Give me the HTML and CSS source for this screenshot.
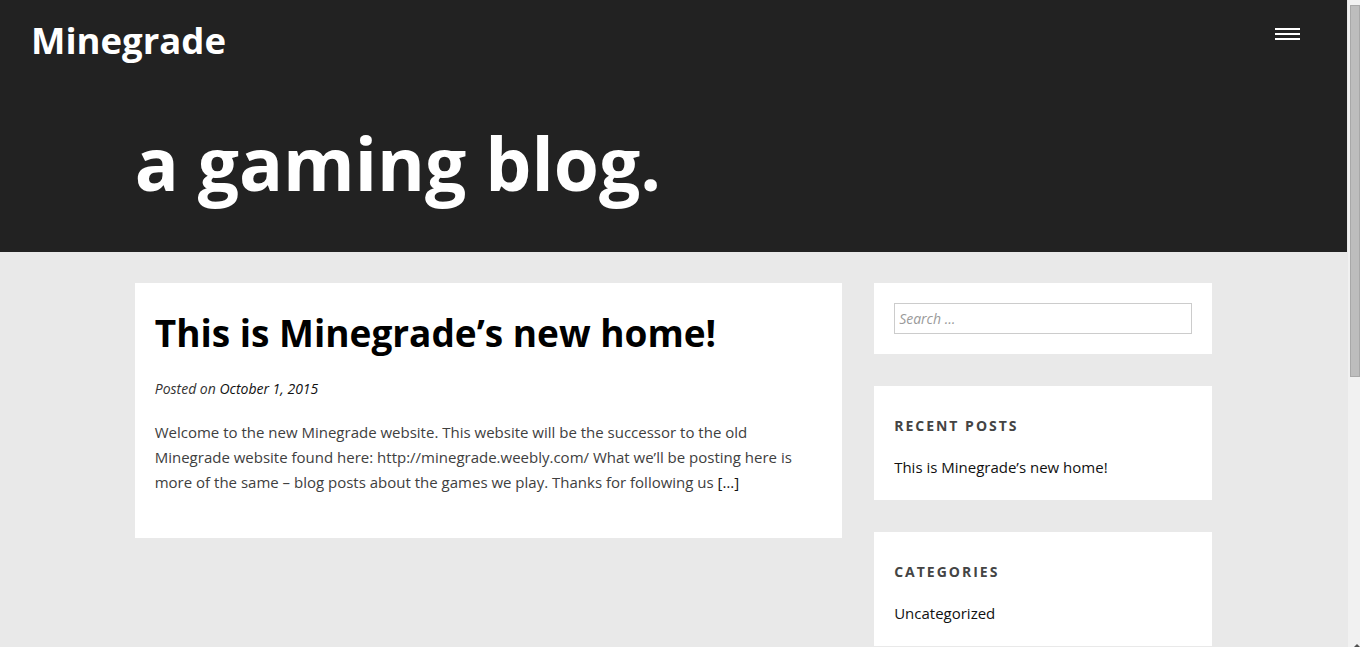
FILE: index.html
```html
<!DOCTYPE html>
<html lang="en">
<head>
<meta charset="utf-8">
<title>Minegrade – a gaming blog.</title>
<link rel="stylesheet" href="styles.css">
</head>
<body>
<header class="site-header">
  <div class="topbar">
    <a class="site-title" href="#">Minegrade</a>
    <button class="menu-toggle" aria-label="Menu">
      <span class="bar"></span><span class="bar"></span><span class="bar"></span>
    </button>
  </div>
  <div class="hero">
    <h1 class="tagline">a gaming blog.</h1>
  </div>
</header>
<div class="page">
  <main class="content">
    <article class="post">
      <h2 class="post-title">This is Minegrade’s new home!</h2>
      <div class="post-meta">Posted on <a href="#">October 1, 2015</a></div>
      <p class="post-excerpt">Welcome to the new Minegrade website. This website will be the successor to the old Minegrade website found here: http://minegrade.weebly.com/ What we’ll be posting here is more of the same – blog posts about the games we play. Thanks for following us <a href="#">[…]</a></p>
    </article>
  </main>
  <aside class="sidebar">
    <section class="widget widget-search">
      <input class="search-field" type="search" placeholder="Search …">
    </section>
    <section class="widget widget-links">
      <h3 class="widget-title">Recent Posts</h3>
      <ul class="widget-list"><li><a href="#">This is Minegrade’s new home!</a></li></ul>
    </section>
    <section class="widget widget-links">
      <h3 class="widget-title">Categories</h3>
      <ul class="widget-list"><li><a href="#">Uncategorized</a></li></ul>
    </section>
    <section class="widget widget-links">
      <h3 class="widget-title">Archives</h3>
      <ul class="widget-list"><li><a href="#">October 2015</a></li></ul>
    </section>
  </aside>
</div>
<div class="scrollbar" aria-hidden="true">
  <div class="scroll-thumb"></div>
  <div class="scroll-arrow"></div>
</div>
</body>
</html>
```

FILE: styles.css
```css
html, body {
  margin: 0;
  padding: 0;
}
body {
  background: #e9e9e9;
  font-family: "Open Sans", "Liberation Sans", sans-serif;
  color: #404040;
  margin-right: 13px;
}
a {
  color: #111;
  text-decoration: none;
}
.site-header {
  background: #222222;
  height: 252px;
}
.topbar {
  display: flex;
  justify-content: space-between;
  align-items: flex-start;
  padding: 14px 47px 0 31px;
}
.site-title {
  font-family: "Open Sans", sans-serif;
  font-weight: 700;
  font-size: 36.5px;
  line-height: 52px;
  color: #fff;
}
.menu-toggle {
  background: none;
  border: 0;
  padding: 0;
  margin-top: 14px;
  display: flex;
  flex-direction: column;
  gap: 3px;
  cursor: pointer;
}
.menu-toggle .bar {
  display: block;
  width: 25px;
  height: 2px;
  background: #fff;
}
.hero {
  width: 80%;
  margin: 0 auto;
}
.tagline {
  margin: 0;
  padding-top: 52px;
  font-family: "Open Sans", sans-serif;
  font-weight: 700;
  font-size: 73px;
  line-height: 90px;
  color: #fff;
}
.page {
  width: 80%;
  margin: 31px auto 0;
  display: flex;
  gap: 32px;
  align-items: flex-start;
}
.content {
  flex: 0 0 65.65%;
}
.sidebar {
  flex: 1 1 auto;
  display: flex;
  flex-direction: column;
  gap: 32px;
}
.post {
  background: #fff;
  padding: 20px 20px 43px;
}
.post-title {
  margin: 0;
  font-family: "Open Sans", sans-serif;
  font-weight: 700;
  font-size: 37px;
  line-height: 60px;
  color: #000;
}
.post-meta {
  margin-top: 16px;
  font-style: italic;
  font-size: 14px;
  line-height: 20px;
  color: #333;
}
.post-excerpt {
  margin: 21px 0 0;
  font-size: 15px;
  line-height: 25px;
  color: #404040;
}
.widget {
  background: #fff;
  padding: 20px;
}
.search-field {
  box-sizing: border-box;
  display: block;
  width: 100%;
  height: 31px;
  border: 1px solid #ccc;
  padding: 0 4px;
  font-family: "Open Sans", sans-serif;
  font-size: 14px;
  outline: none;
}
.search-field::placeholder {
  color: #9a9a9a;
  font-style: italic;
}
.widget-title {
  margin: 10px 0 19px;
  font-family: "Open Sans", sans-serif;
  font-weight: 700;
  font-size: 14px;
  line-height: 20px;
  letter-spacing: 2px;
  text-transform: uppercase;
  color: #444;
}
.widget-list {
  list-style: none;
  margin: 0;
  padding: 0;
  font-size: 15px;
  line-height: 25px;
}
.scrollbar {
  position: fixed;
  top: 0;
  right: 0;
  bottom: 0;
  width: 12px;
  background: #f1f1f1;
}
.scroll-thumb {
  position: absolute;
  top: 5px;
  left: 2px;
  right: 0;
  height: 372px;
  box-sizing: border-box;
  background: #bdbdbd;
  border: 1px solid #a8a8a8;
}
.scroll-arrow {
  position: absolute;
  bottom: 0;
  right: 0;
  width: 0;
  height: 0;
  border-left: 3px solid transparent;
  border-right: 3px solid transparent;
  border-bottom: 3px solid #505050;
}
```
